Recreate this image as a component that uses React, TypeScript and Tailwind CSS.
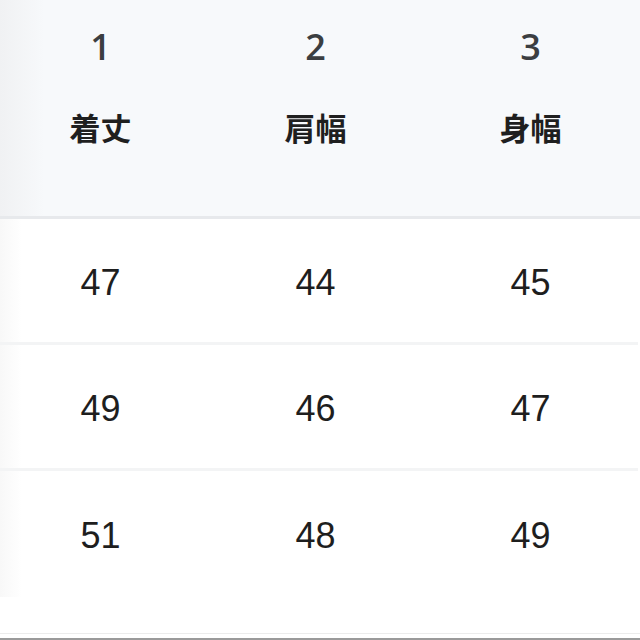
const headers = [
  { no: "1", label: "着丈" },
  { no: "2", label: "肩幅" },
  { no: "3", label: "身幅" },
];

const rows = [
  ["47", "44", "45"],
  ["49", "46", "47"],
  ["51", "48", "49"],
];

export default function App() {
  return (
    <div
      className="relative w-[640px] h-[640px] overflow-hidden bg-white text-[#222]"
      style={{ fontFamily: '"Liberation Sans", "Noto Sans CJK JP", sans-serif' }}
    >
      <div className="relative">
        <div className="relative bg-[#f7f9fb] h-[219px] border-b-[3px] border-[#e7e9ec]">
          {/* sticky column shadow */}
          <div className="absolute left-0 top-0 w-[44px] h-full bg-gradient-to-r from-[#f0f1f3] to-transparent" />
          <div className="relative grid grid-cols-3 w-[645px] -ml-[7px]">
            {headers.map((h) => (
              <div key={h.no} className="flex flex-col items-center pt-[27px]">
                <div
                  className="text-[36px] leading-[40px] font-semibold text-[#3b3e41]"
                  style={{ fontFamily: '"Open Sans", sans-serif' }}
                >
                  {h.no}
                </div>
                <div
                  className="mt-[41px] text-[31px] leading-[38px] font-bold text-[#1f1f1f]"
                  style={{ fontFamily: '"Noto Sans CJK JP", sans-serif' }}
                >
                  {h.label}
                </div>
              </div>
            ))}
          </div>
        </div>

        <div className="relative">
          <div className="absolute left-0 top-0 w-[22px] h-full bg-gradient-to-r from-[#f8f8f8] to-transparent" />
          {rows.map((r, i) => (
            <div
              key={i}
              className={`relative grid grid-cols-3 w-[645px] -ml-[7px] h-[126px] items-center pt-[4px] ${
                i < 2 ? "border-b-[3px] border-[#f3f4f5]" : ""
              }`}
            >
              {r.map((v, j) => (
                <div key={j} className="text-center text-[36px] leading-none text-[#1e1e1e]">
                  {v}
                </div>
              ))}
            </div>
          ))}
        </div>
      </div>

      <div className="absolute left-0 bottom-[6px] w-full h-px bg-[#ececec]" />
      <div className="absolute left-0 bottom-0 w-full h-[2px] bg-[#9a9a9a]" />
    </div>
  );
}
